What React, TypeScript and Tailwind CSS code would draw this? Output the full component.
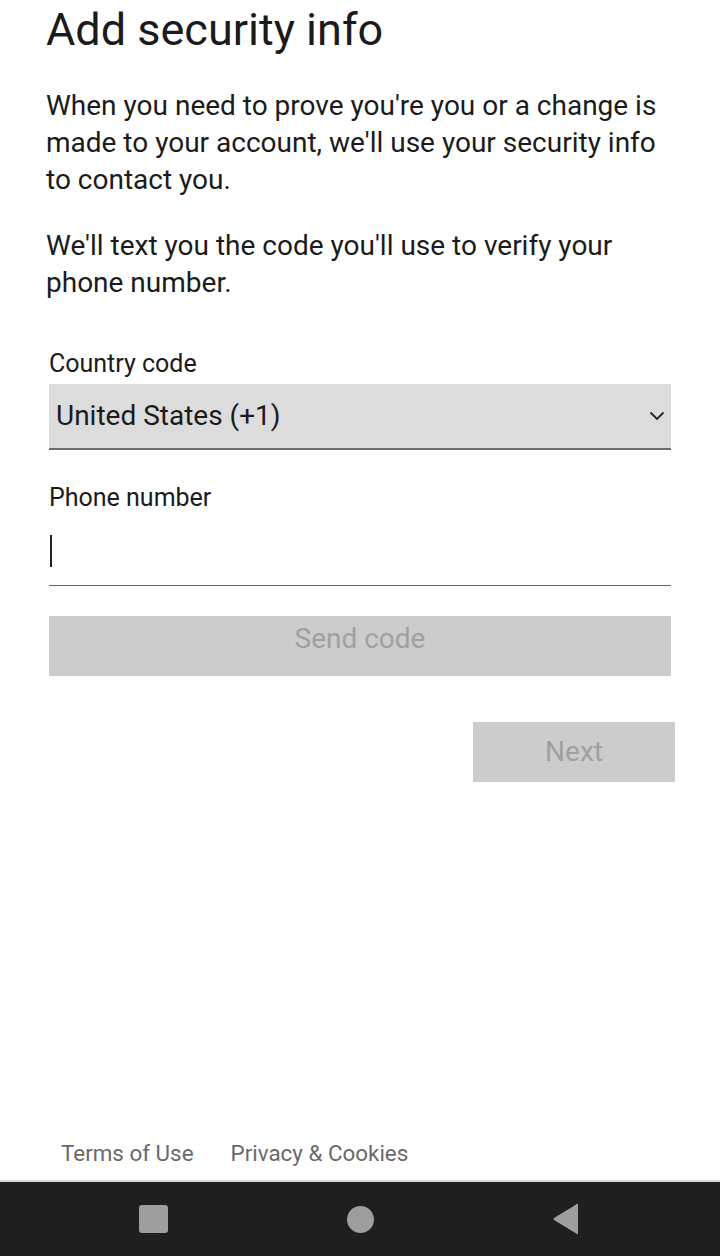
export default function App() {
  return (
    <div className="w-[720px] h-[1256px] bg-white flex flex-col font-['Roboto',sans-serif] text-[#1b1b1b] overflow-hidden">
      <main className="flex-1 flex flex-col">
        <div className="px-[46px]">
          <h1 className="text-[45px] leading-[48px] mt-[6px] text-[#1b1b1b]">Add security info</h1>
          <p className="mt-[33px] text-[28px] leading-[37px]">
            When you need to prove you're you or a change is made to your account, we'll use your security info to contact you.
          </p>
          <p className="mt-[29px] text-[28px] leading-[37px]">
            We'll text you the code you'll use to verify your phone number.
          </p>
        </div>

        <div className="pl-[49px] pr-[49px] mt-[48px]">
          <label className="block text-[25px] leading-[30px]">Country code</label>
          <div className="mt-[5px] h-[66px] bg-[#dcdcdc] border-b-2 border-[#6b6b6b] flex items-center justify-between pl-[7px] pr-[6px]">
            <span className="text-[28px]">United States (+1)</span>
            <svg width="16" height="10" viewBox="0 0 16 10" fill="none" stroke="#222" strokeWidth="1.8">
              <path d="M1.5 1.5 L8 8 L14.5 1.5" />
            </svg>
          </div>

          <label className="block mt-[33px] text-[25px] leading-[30px]">Phone number</label>
          <div className="mt-[17px] h-[56px] border-b border-[#2f72ad] flex items-start">
            <span className="block w-[2px] h-[32px] mt-[5px] ml-[1px] bg-[#222]" />
          </div>

          <button className="mt-[30px] w-full h-[60px] bg-[#cccccc] text-[#a0a0a0] text-[28px] flex items-center justify-center pb-[14px]">Send code</button>
        </div>

        <div className="flex justify-end pr-[45px] mt-[46px]">
          <button className="w-[202px] h-[60px] bg-[#cccccc] text-[#a0a0a0] text-[28px]">Next</button>
        </div>

        <div className="mt-auto mb-[9px] flex gap-[37px] pl-[61px] text-[22.4px] text-[#6a6a6a]">
          <span>Terms of Use</span>
          <span>Privacy &amp; Cookies</span>
        </div>
      </main>

      <nav className="h-[76px] bg-[#1f1f1f] border-t-2 border-[#d8d8d8] flex items-center justify-between pl-[139px] pr-[140px]">
        <div className="w-[29px] h-[28px] rounded-[3px] bg-[#9e9e9e]" />
        <div className="w-[27px] h-[27px] rounded-full bg-[#9e9e9e]" />
        <svg width="28" height="32" viewBox="0 0 28 32">
          <path d="M26 1 L26 31 Q26 32 25 31 L2 17 Q1 16 2 15 L25 1 Q26 0 26 1 Z" fill="#9e9e9e" />
        </svg>
      </nav>
    </div>
  );
}
